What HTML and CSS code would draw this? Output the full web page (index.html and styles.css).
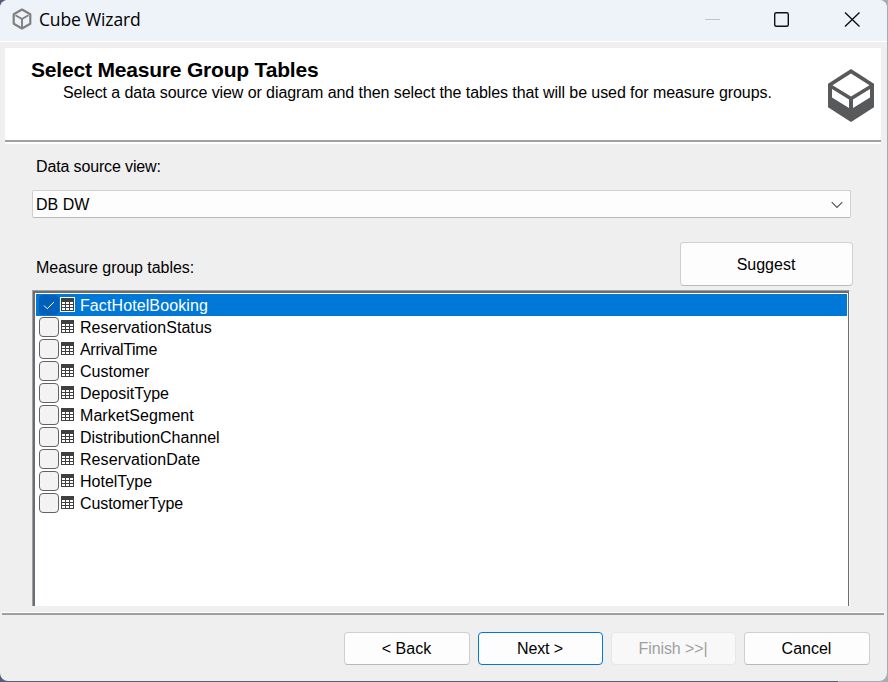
FILE: index.html
```html
<!DOCTYPE html>
<html lang="en">
<head>
<meta charset="utf-8">
<title>Cube Wizard</title>
<link rel="stylesheet" href="styles.css">
</head>
<body>
<svg class="defs" width="0" height="0" aria-hidden="true">
  <symbol id="table" viewBox="0 0 15 15">
    <path class="halo" d="M0 0h15v15H0z"/>
    <path fill="#404040" d="M1 1h13v13H1z"/>
    <path fill="#fff" d="M2 5h3v2H2zM6 5h3v2H6zM10 5h3v2h-3zM2 8h3v2H2zM6 8h3v2H6zM10 8h3v2h-3zM2 11h3v2H2zM6 11h3v2H6zM10 11h3v2h-3z"/>
  </symbol>
</svg>
<div class="window">
  <header class="titlebar">
    <svg class="app-icon" width="20" height="22" viewBox="0 0 20 22" fill="none" stroke="#808080" stroke-width="2.200" stroke-linejoin="round"><path d="M10 1.500l8.300 4.700v9.600L10 20.500l-8.300-4.700V6.200z"/><path stroke-width="1.900" d="M3.500 7.200L10 11l6.500-3.800M10 11v8"/></svg>
    <span class="caption">Cube Wizard</span>
    <svg class="controls" width="160" height="20" viewBox="0 0 160 20" fill="none" stroke="#111" stroke-width="1.400"><path stroke="#bfc3c7" stroke-width="1" d="M5 9.500h15"/><rect x="74.700" y="2.700" width="13.600" height="13.600" rx="1.500"/><path d="M145 2.500l14.500 14M159.500 2.500L145 16.500"/></svg>
  </header>
  <section class="banner">
    <div class="banner-text">
      <h1>Select Measure Group Tables</h1>
      <p>Select a data source view or diagram and then select the tables that will be used for measure groups.</p>
    </div>
    <svg class="cube" width="46" height="53" viewBox="0 0 46 54" preserveAspectRatio="none"><path fill="#58595b" d="M23 0l23 15v24L23 54 0 39V15z"/><path fill="#fff" d="M23 4.500l18.500 12L23 28 4.500 16.500zM4 20.500l17 10.700v8.600L4 29zM42 20.500L25 31.200v8.600L42 29z"/></svg>
  </section>
  <main class="content">
    <label class="label source">Data source view:</label>
    <div class="combo"><span>DB DW</span><svg width="12" height="8" viewBox="0 0 12 8" fill="none" stroke="#555" stroke-width="1.200"><path d="M.7 1.200L6 6.500l5.300-5.300"/></svg></div>
    <div class="tables-head"><label class="label">Measure group tables:</label><button class="button suggest">Suggest</button></div>
    <div class="list-frame">
      <ul class="list">
        <li class="selected"><i class="box"><svg width="12" height="9" viewBox="0 0 12 9" fill="none" stroke="#fff" stroke-width="1"><path d="M1 4.500L4.200 7.700 11 1"/></svg></i><svg class="table"><use href="#table"/></svg><span>FactHotelBooking</span></li>
        <li><i class="box"></i><svg class="table"><use href="#table"/></svg><span class="loose">ReservationStatus</span></li>
        <li><i class="box"></i><svg class="table"><use href="#table"/></svg><span class="tight">ArrivalTime</span></li>
        <li><i class="box"></i><svg class="table"><use href="#table"/></svg><span>Customer</span></li>
        <li><i class="box"></i><svg class="table"><use href="#table"/></svg><span>DepositType</span></li>
        <li><i class="box"></i><svg class="table"><use href="#table"/></svg><span class="loose">MarketSegment</span></li>
        <li><i class="box"></i><svg class="table"><use href="#table"/></svg><span>DistributionChannel</span></li>
        <li><i class="box"></i><svg class="table"><use href="#table"/></svg><span class="loose">ReservationDate</span></li>
        <li><i class="box"></i><svg class="table"><use href="#table"/></svg><span>HotelType</span></li>
        <li><i class="box"></i><svg class="table"><use href="#table"/></svg><span class="snug">CustomerType</span></li>
      </ul>
    </div>
  </main>
  <footer class="footer">
    <button class="button">&lt; Back</button>
    <button class="button narrow primary">Next &gt;</button>
    <button class="button narrow" disabled>Finish &gt;&gt;|</button>
    <button class="button">Cancel</button>
  </footer>
</div>
</body>
</html>
```

FILE: styles.css
```css
* { box-sizing: border-box; }
body {
  margin: 0;
  width: 888px;
  height: 682px;
  overflow: hidden;
  background: linear-gradient(90deg, #565d78 0 838px, #a9abb1 838px);
  font: 16px/20px "Liberation Sans", Arial, sans-serif;
  color: #000;
}
.defs { display: block; }
.window {
  width: 887px;
  height: 681px;
  display: flex;
  flex-direction: column;
  background: #efefef;
  border-radius: 8px;
  overflow: hidden;
}
.titlebar {
  height: 42px;
  flex: none;
  display: flex;
  align-items: flex-start;
  padding: 8px 27px 0 12px;
  background: #eef3f9;
  border-bottom: 1px solid #fff;
}
.caption {
  margin: 0 auto 0 7px;
  font: 17.5px/23px "Open Sans", sans-serif;
  letter-spacing: -0.15px;
}
.controls { margin-top: 2px; }
.banner {
  height: 96px;
  flex: none;
  margin: 6px 6px 0 5px;
  display: flex;
  justify-content: space-between;
  padding: 10px 7px 0 26px;
  background: #fff;
  border-bottom: 2px solid #fff;
  box-shadow: inset 0 -2px #a0a0a0;
}
h1 { margin: 0; font-size: 21px; line-height: 24px; letter-spacing: -0.19px; }
.banner p { margin: 1px 0 0 32px; letter-spacing: -0.08px; white-space: nowrap; }
.cube { margin-top: 11px; }
.content {
  height: 462px;
  flex: none;
  padding: 13px 34px 0 32px;
}
.label { display: block; margin-left: 4px; letter-spacing: -0.05px; }
.source { letter-spacing: -0.14px; }
.combo {
  width: 819px;
  height: 28px;
  margin-top: 13px;
  padding: 1px 7px 0 3px;
  display: flex;
  align-items: center;
  justify-content: space-between;
  background: #fdfdfd;
  border: 1px solid #d0d0d0;
  border-bottom-color: #bababa;
  border-radius: 2px;
}
.tables-head {
  height: 44px;
  margin: 24px 0 4px;
  display: flex;
  justify-content: space-between;
}
.tables-head .label { margin-top: 16px; }
.button {
  width: 126px;
  height: 33px;
  padding: 1px 1px 0 0;
  font: inherit;
  color: #000;
  background: #fdfdfd;
  border: 1px solid #d0d0d0;
  border-bottom-color: #bababa;
  border-radius: 4px;
}
.narrow { width: 125px; letter-spacing: -0.1px; }
.suggest { width: 173px; height: 44px; padding-top: 2px; }
.primary { border-color: #0078d4; }
.button:disabled { color: #a0a0a0; background: #f8f8f8; border-color: #e7e7e7; }
.list-frame {
  width: 818px;
  height: 316px;
  border: solid #a0a0a0;
  border-width: 1px 0 0 1px;
  border-right: 1px solid #fafafa;
}
.list {
  height: 315px;
  margin: 0;
  padding: 1px 1px 0;
  list-style: none;
  background: #fff;
  border: solid #696e75;
  border-width: 2px 1px 0 2px;
}
.list li {
  height: 22px;
  display: flex;
  align-items: center;
  padding-left: 3px;
}
.list span { padding-top: 2px; }
.list .tight { letter-spacing: -0.3px; }
.list .snug { letter-spacing: -0.08px; }
.list .loose { letter-spacing: 0.07px; }
.box {
  width: 20px;
  height: 20px;
  flex: none;
  display: flex;
  align-items: center;
  justify-content: center;
  background: #f3f3f3;
  border: 1px solid #626262;
  border-radius: 4px;
}
.table { width: 15px; height: 15px; margin: 0 5px 2px 1px; flex: none; }
.halo { fill: var(--halo, none); }
.selected { --halo: #fff; background: #0078d7; color: #fff; }
.selected span { letter-spacing: 0.1px; }
.selected .box { background: #005fb8; border-color: #005fb8; }
.footer {
  flex: 1;
  margin: 6px 3px 0 2px;
  padding: 19px 14px 0 0;
  display: flex;
  justify-content: flex-end;
  gap: 8px;
  border-top: 1px solid #fff;
  box-shadow: inset 0 2px #a0a0a0;
}
```
